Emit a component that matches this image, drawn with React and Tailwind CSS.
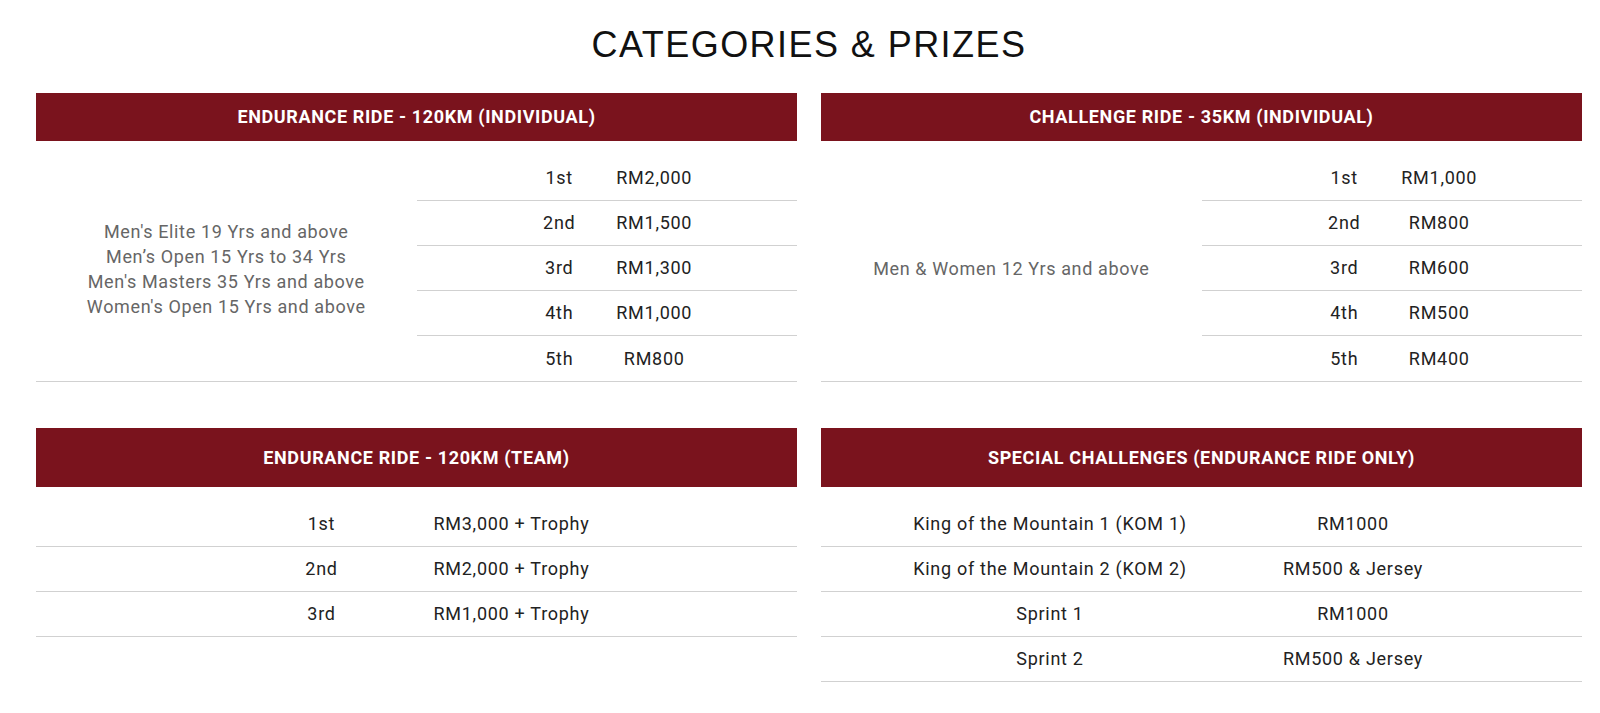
import React from "react";

const HEADER_TXT =
  "text-white font-bold uppercase text-[18px] tracking-[0.035em] leading-none";
const ROW_TXT = "text-[#222] text-[18px] tracking-[0.04em] leading-none";

function Header({ title, tall }) {
  return (
    <div
      className={`${tall ? "h-[59px]" : "h-[48px]"} bg-[#7a131d] flex items-center justify-center`}
    >
      <span className={HEADER_TXT}>{title}</span>
    </div>
  );
}

function PrizeRows({ rows }) {
  return (
    <div className="w-1/2 flex flex-col">
      {rows.map(([rank, prize], i) => (
        <div
          key={rank}
          className={`h-[45px] flex items-center justify-center ${
            i < rows.length - 1 ? "border-b border-[#d1d1d1]" : ""
          }`}
        >
          <div className={`w-[95px] text-center ${ROW_TXT}`}>{rank}</div>
          <div className={`w-[95px] text-center ${ROW_TXT}`}>{prize}</div>
        </div>
      ))}
    </div>
  );
}

function IndividualPanel({ title, categories, rows }) {
  return (
    <div className="flex flex-col">
      <Header title={title} />
      <div className="mt-[15px] flex border-b border-[#d1d1d1]">
        <div className="w-1/2 flex flex-col items-center justify-center text-center text-[#666] text-[18px] leading-[25px] tracking-[0.035em]">
          {categories.map((c) => (
            <div key={c}>{c}</div>
          ))}
        </div>
        <PrizeRows rows={rows} />
      </div>
    </div>
  );
}

function ListPanel({ title, rows, colW }) {
  return (
    <div className="flex flex-col">
      <Header title={title} tall />
      <div className="mt-[15px] flex flex-col">
        {rows.map(([a, b]) => (
          <div
            key={a}
            className="h-[45px] flex items-center justify-center border-b border-[#d1d1d1]"
          >
            <div className={`${colW} text-center ${ROW_TXT}`}>{a}</div>
            <div className={`${colW} text-center ${ROW_TXT}`}>{b}</div>
          </div>
        ))}
      </div>
    </div>
  );
}

export default function App() {
  return (
    <div className="min-h-screen bg-white font-['Roboto',sans-serif] pl-[36px] pr-[18px]">
      <h1 className="pt-[25px] mb-[28px] h-[65px] text-center font-['Liberation_Sans',Arial,sans-serif] text-[36px] leading-[40px] tracking-[0.04em] text-[#111] font-normal">
        CATEGORIES &amp; PRIZES
      </h1>
      <div className="grid grid-cols-2 gap-x-[24px] gap-y-[46px]">
        <IndividualPanel
          title="Endurance Ride - 120KM (Individual)"
          categories={[
            "Men's Elite 19 Yrs and above",
            "Men’s Open 15 Yrs to 34 Yrs",
            "Men's Masters 35 Yrs and above",
            "Women's Open 15 Yrs and above",
          ]}
          rows={[
            ["1st", "RM2,000"],
            ["2nd", "RM1,500"],
            ["3rd", "RM1,300"],
            ["4th", "RM1,000"],
            ["5th", "RM800"],
          ]}
        />
        <IndividualPanel
          title="Challenge Ride - 35KM (Individual)"
          categories={["Men & Women 12 Yrs and above"]}
          rows={[
            ["1st", "RM1,000"],
            ["2nd", "RM800"],
            ["3rd", "RM600"],
            ["4th", "RM500"],
            ["5th", "RM400"],
          ]}
        />
        <ListPanel
          title="Endurance Ride - 120KM (Team)"
          colW="w-[190px]"
          rows={[
            ["1st", "RM3,000 + Trophy"],
            ["2nd", "RM2,000 + Trophy"],
            ["3rd", "RM1,000 + Trophy"],
          ]}
        />
        <ListPanel
          title="Special Challenges (Endurance Ride Only)"
          colW="w-[303px]"
          rows={[
            ["King of the Mountain 1 (KOM 1)", "RM1000"],
            ["King of the Mountain 2 (KOM 2)", "RM500 & Jersey"],
            ["Sprint 1", "RM1000"],
            ["Sprint 2", "RM500 & Jersey"],
          ]}
        />
      </div>
    </div>
  );
}
